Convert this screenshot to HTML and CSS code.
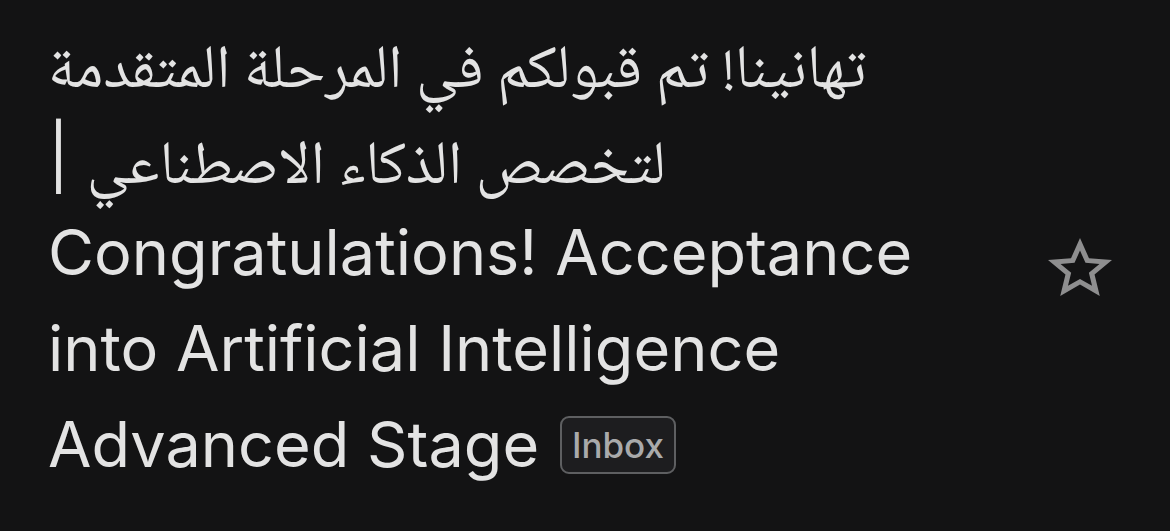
FILE: index.html
```html
<!DOCTYPE html>
<html lang="ar">
<head>
<meta charset="utf-8">
<link rel="stylesheet" href="styles.css">
</head>
<body>
<div class="row">
  <div class="subject" dir="ltr"><span class="title" dir="rtl"><span class="ar">تهانينا! تم قبولكم في المرحلة المتقدمة لتخصص الذكاء الاصطناعي</span> | Congratulations! Acceptance into Artificial Intelligence Advanced Stage</span> <span class="badge">Inbox</span></div>
  <div class="star">
    <svg width="64" height="58" viewBox="2 2 20 19" preserveAspectRatio="none"><path fill="#8e8e8f" d="M22 9.24l-7.19-.62L12 2 9.19 8.63 2 9.24l5.46 4.73L5.82 21 12 17.270 18.18 21l-1.63-7.03L22 9.24zM12 15.4l-3.76 2.27 1-4.28-3.320-2.88 4.38-.38L12 6.1l1.71 4.04 4.38.38-3.32 2.88 1 4.28L12 15.4z"/></svg>
  </div>
</div>
</body>
</html>
```
FILE: styles.css
```css
html, body {
  margin: 0;
  padding: 0;
  background: #131314;
}
.row {
  display: flex;
  align-items: flex-start;
  padding: 12px 58px 0 48px;
  height: 531px;
  box-sizing: border-box;
}
.subject {
  width: 960px;
  font-family: Inter, "Noto Sans", sans-serif;
  font-size: 63px;
  line-height: 96px;
  color: #e3e3e3;
  text-align: left;
}
.title {
  unicode-bidi: isolate;
}
.ar {
  font-family: "Noto Naskh Arabic", "Noto Sans Arabic", serif;
  font-size: 61px;
  line-height: 40px;
  vertical-align: -4px;
}
.badge {
  display: inline-block;
  vertical-align: 9px;
  font-size: 35px;
  font-weight: 500;
  line-height: 54px;
  padding: 0 10px;
  border: 2.5px solid #5e5f61;
  border-radius: 9px;
  color: #a9aaab;
  background: #1d1d1f;
  margin-left: 3px;
}
.star {
  margin-left: auto;
  margin-top: 226px;
  display: flex;
}
```
